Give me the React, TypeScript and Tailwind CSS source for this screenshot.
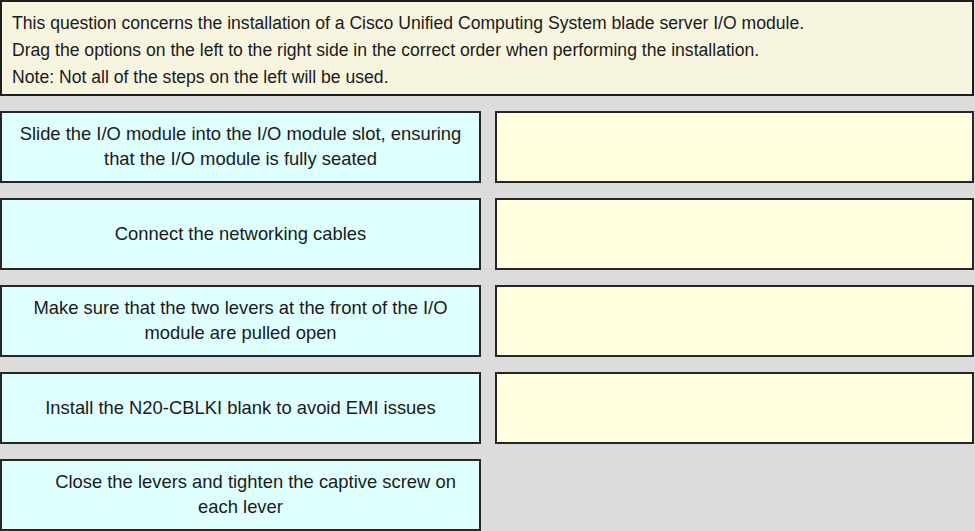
import React from "react";

const left: React.ReactNode[] = [
  <>
    <div>Slide the I/O module into the I/O module slot, ensuring</div>
    <div>that the I/O module is fully seated</div>
  </>,
  <div>Connect the networking cables</div>,
  <>
    <div>Make sure that the two levers at the front of the I/O</div>
    <div>module are pulled open</div>
  </>,
  <div>Install the N20-CBLKI blank to avoid EMI issues</div>,
  <>
    <div className="pl-[30px]">Close the levers and tighten the captive screw on</div>
    <div>each lever</div>
  </>,
];

export default function App() {
  return (
    <div
      className="w-[975px] h-[531px] overflow-hidden bg-[#dcdcdc] text-[#1a1a1a]"
      style={{ fontFamily: '"Liberation Sans", Arial, sans-serif' }}
    >
      <div className="h-[96px] w-[974px] border-2 border-[#1e1e1e] bg-[#f7f5e0] pl-[10px] pt-[8px] text-[17.6px] leading-[27px]">
        <div>This question concerns the installation of a Cisco Unified Computing System blade server I/O module.</div>
        <div>Drag the options on the left to the right side in the correct order when performing the installation.</div>
        <div>Note: Not all of the steps on the left will be used.</div>
      </div>
      <div className="mt-[15px] grid grid-cols-[481px_479px] gap-x-[14px] gap-y-[15px] auto-rows-[72px]">
        {left.map((content, i) => (
          <React.Fragment key={i}>
            <div className="flex flex-col items-center justify-center border-2 border-[#262626] bg-[#dfffff] text-center text-[18.4px] leading-[25px] pb-[2px]">
              {content}
            </div>
            {i < 4 ? (
              <div className="border-2 border-[#262626] bg-[#ffffdf]" />
            ) : (
              <div />
            )}
          </React.Fragment>
        ))}
      </div>
    </div>
  );
}
